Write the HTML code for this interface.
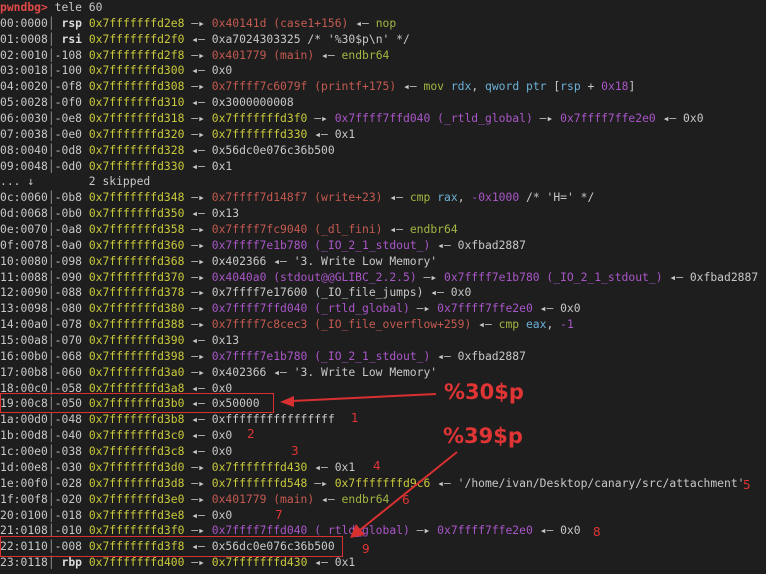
<!DOCTYPE html>
<html><head><meta charset="utf-8"><style>
html,body{margin:0;padding:0;background:#1e1e1e;width:766px;height:574px;overflow:hidden}
pre{margin:0;position:absolute;left:0;top:0;font-family:"DejaVu Sans Mono","Liberation Mono",monospace;font-size:11.35px;line-height:15.86px;color:#c8c8c8;white-space:pre}
.y{color:#c9c93c}.r{color:#c45a50}.p{color:#a956c8}.g{color:#a3b542}.b{color:#6cb0d6}.k{color:#dcdcdc;font-weight:bold}.pr{color:#e04848;font-weight:bold}.s{color:#9a9a9a}
.lbl{position:absolute;font-family:"DejaVu Sans","Liberation Sans",sans-serif;font-weight:bold;color:#e03535;font-size:21px}
.n{position:absolute;font-family:"DejaVu Sans","Liberation Sans",sans-serif;color:#e03535;font-size:12px;line-height:12px}
.box{position:absolute;border:1.5px solid #d83030;box-sizing:border-box}
</style></head><body>
<pre><span class="pr">pwndbg&gt;</span> tele 60
00:0000<span class="s">│</span> <span class="k">rsp</span> <span class="y">0x7fffffffd2e8</span> —▸ <span class="r">0x40141d (case1+156)</span> ◂— <span class="g">nop</span>
01:0008<span class="s">│</span> <span class="k">rsi</span> <span class="y">0x7fffffffd2f0</span> ◂— 0xa7024303325 /* '%30$p\n' */
02:0010<span class="s">│</span>-108 <span class="y">0x7fffffffd2f8</span> —▸ <span class="r">0x401779 (main)</span> ◂— <span class="g">endbr64</span>
03:0018<span class="s">│</span>-100 <span class="y">0x7fffffffd300</span> ◂— 0x0
04:0020<span class="s">│</span>-0f8 <span class="y">0x7fffffffd308</span> —▸ <span class="r">0x7ffff7c6079f (printf+175)</span> ◂— <span class="g">mov</span> <span class="b">rdx</span>, <span class="b">qword ptr</span> [<span class="b">rsp</span> + <span class="p">0x18</span>]
05:0028<span class="s">│</span>-0f0 <span class="y">0x7fffffffd310</span> ◂— 0x3000000008
06:0030<span class="s">│</span>-0e8 <span class="y">0x7fffffffd318</span> —▸ <span class="y">0x7fffffffd3f0</span> —▸ <span class="p">0x7ffff7ffd040 (_rtld_global)</span> —▸ <span class="p">0x7ffff7ffe2e0</span> ◂— 0x0
07:0038<span class="s">│</span>-0e0 <span class="y">0x7fffffffd320</span> —▸ <span class="y">0x7fffffffd330</span> ◂— 0x1
08:0040<span class="s">│</span>-0d8 <span class="y">0x7fffffffd328</span> ◂— 0x56dc0e076c36b500
09:0048<span class="s">│</span>-0d0 <span class="y">0x7fffffffd330</span> ◂— 0x1
... ↓        2 skipped
0c:0060<span class="s">│</span>-0b8 <span class="y">0x7fffffffd348</span> —▸ <span class="r">0x7ffff7d148f7 (write+23)</span> ◂— <span class="g">cmp</span> <span class="b">rax</span>, <span class="p">-0x1000</span> /* 'H=' */
0d:0068<span class="s">│</span>-0b0 <span class="y">0x7fffffffd350</span> ◂— 0x13
0e:0070<span class="s">│</span>-0a8 <span class="y">0x7fffffffd358</span> —▸ <span class="r">0x7ffff7fc9040 (_dl_fini)</span> ◂— <span class="g">endbr64</span>
0f:0078<span class="s">│</span>-0a0 <span class="y">0x7fffffffd360</span> —▸ <span class="p">0x7ffff7e1b780 (_IO_2_1_stdout_)</span> ◂— 0xfbad2887
10:0080<span class="s">│</span>-098 <span class="y">0x7fffffffd368</span> —▸ 0x402366 ◂— '3. Write Low Memory'
11:0088<span class="s">│</span>-090 <span class="y">0x7fffffffd370</span> —▸ <span class="p">0x4040a0 (stdout@@GLIBC_2.2.5)</span> —▸ <span class="p">0x7ffff7e1b780 (_IO_2_1_stdout_)</span> ◂— 0xfbad2887
12:0090<span class="s">│</span>-088 <span class="y">0x7fffffffd378</span> —▸ 0x7ffff7e17600 (_IO_file_jumps) ◂— 0x0
13:0098<span class="s">│</span>-080 <span class="y">0x7fffffffd380</span> —▸ <span class="p">0x7ffff7ffd040 (_rtld_global)</span> —▸ <span class="p">0x7ffff7ffe2e0</span> ◂— 0x0
14:00a0<span class="s">│</span>-078 <span class="y">0x7fffffffd388</span> —▸ <span class="r">0x7ffff7c8cec3 (_IO_file_overflow+259)</span> ◂— <span class="g">cmp</span> <span class="b">eax</span>, <span class="p">-1</span>
15:00a8<span class="s">│</span>-070 <span class="y">0x7fffffffd390</span> ◂— 0x13
16:00b0<span class="s">│</span>-068 <span class="y">0x7fffffffd398</span> —▸ <span class="p">0x7ffff7e1b780 (_IO_2_1_stdout_)</span> ◂— 0xfbad2887
17:00b8<span class="s">│</span>-060 <span class="y">0x7fffffffd3a0</span> —▸ 0x402366 ◂— '3. Write Low Memory'
18:00c0<span class="s">│</span>-058 <span class="y">0x7fffffffd3a8</span> ◂— 0x0
19:00c8<span class="s">│</span>-050 <span class="y">0x7fffffffd3b0</span> ◂— 0x50000
1a:00d0<span class="s">│</span>-048 <span class="y">0x7fffffffd3b8</span> ◂— 0xffffffffffffffff
1b:00d8<span class="s">│</span>-040 <span class="y">0x7fffffffd3c0</span> ◂— 0x0
1c:00e0<span class="s">│</span>-038 <span class="y">0x7fffffffd3c8</span> ◂— 0x0
1d:00e8<span class="s">│</span>-030 <span class="y">0x7fffffffd3d0</span> —▸ <span class="y">0x7fffffffd430</span> ◂— 0x1
1e:00f0<span class="s">│</span>-028 <span class="y">0x7fffffffd3d8</span> —▸ <span class="y">0x7fffffffd548</span> —▸ <span class="y">0x7fffffffd9c6</span> ◂— '/home/ivan/Desktop/canary/src/attachment'
1f:00f8<span class="s">│</span>-020 <span class="y">0x7fffffffd3e0</span> —▸ <span class="r">0x401779 (main)</span> ◂— <span class="g">endbr64</span>
20:0100<span class="s">│</span>-018 <span class="y">0x7fffffffd3e8</span> ◂— 0x0
21:0108<span class="s">│</span>-010 <span class="y">0x7fffffffd3f0</span> —▸ <span class="p">0x7ffff7ffd040 (_rtld_global)</span> —▸ <span class="p">0x7ffff7ffe2e0</span> ◂— 0x0
22:0110<span class="s">│</span>-008 <span class="y">0x7fffffffd3f8</span> ◂— 0x56dc0e076c36b500
23:0118<span class="s">│</span> <span class="k">rbp</span> <span class="y">0x7fffffffd400</span> —▸ <span class="y">0x7fffffffd430</span> ◂— 0x1
</pre>
<div class="box" style="left:0;top:393px;width:274px;height:20px"></div>
<div class="box" style="left:0;top:536px;width:343px;height:21px"></div>
<svg width="766" height="574" style="position:absolute;left:0;top:0">
<line x1="436" y1="394" x2="292" y2="401" stroke="#d83030" stroke-width="2"/>
<polygon points="280,402 294,396 294,407" fill="#d83030"/>
<line x1="457" y1="452" x2="360" y2="530" stroke="#d83030" stroke-width="2"/>
<polygon points="350,538 356,524 365,535" fill="#d83030"/>
</svg>
<div class="lbl" style="left:444px;top:380px">%30$p</div>
<div class="lbl" style="left:443px;top:424px">%39$p</div>
<div class="n" style="left:351px;top:412px">1</div>
<div class="n" style="left:247px;top:428px">2</div>
<div class="n" style="left:291px;top:445px">3</div>
<div class="n" style="left:373px;top:460px">4</div>
<div class="n" style="left:743px;top:479px">5</div>
<div class="n" style="left:402px;top:494px">6</div>
<div class="n" style="left:275px;top:509px">7</div>
<div class="n" style="left:593px;top:526px">8</div>
<div class="n" style="left:362px;top:543px">9</div>
</body></html>
